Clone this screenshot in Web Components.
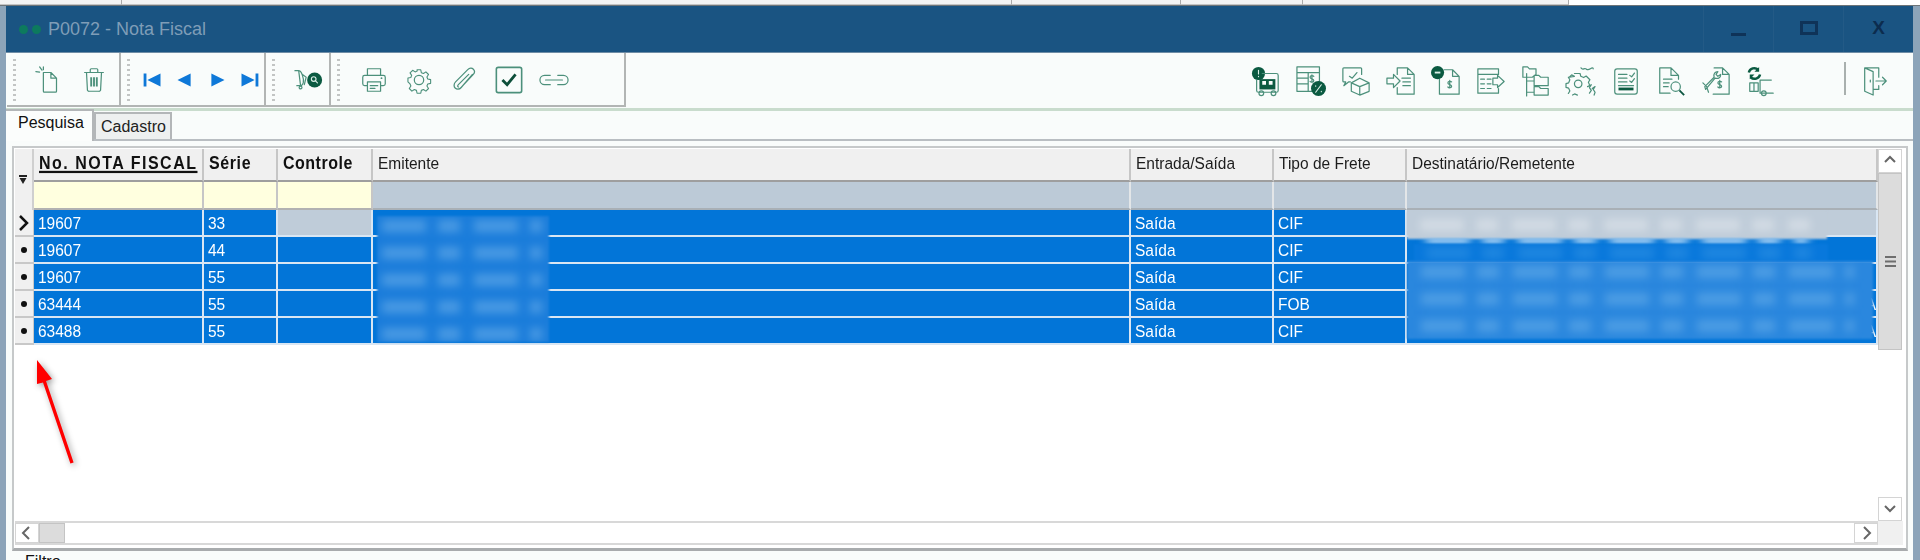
<!doctype html>
<html>
<head>
<meta charset="utf-8">
<style>
  html, body { margin: 0; height: 560px; overflow: hidden; background: #fff; }
  body { font-family: "Liberation Sans", Arial, sans-serif; }
</style>
</head>
<body>
<top-strip></top-strip>
<erp-window>
  <title-bar slot="title">P0072 - Nota Fiscal</title-bar>
  <tool-bar slot="tools">
    <tool-group start="19" style="width:114px" slot="left">
      <tool-icon name="newdoc"></tool-icon><tool-icon name="trash"></tool-icon>
    </tool-group>
    <tool-group start="16" style="width:145px" slot="left">
      <tool-icon name="first" cell="32"></tool-icon><tool-icon name="prev" cell="32"></tool-icon><tool-icon name="next" cell="32"></tool-icon><tool-icon name="last" cell="32"></tool-icon>
    </tool-group>
    <tool-group start="20" style="width:65px" slot="left">
      <tool-icon name="cartsearch"></tool-icon>
    </tool-group>
    <tool-group start="20" style="width:295px" slot="left">
      <tool-icon name="printer"></tool-icon><tool-icon name="gear"></tool-icon><tool-icon name="clip"></tool-icon><tool-icon name="check"></tool-icon><tool-icon name="link"></tool-icon>
    </tool-group>
    <tool-icon slot="right" name="truck"></tool-icon><tool-icon slot="right" name="tablepct"></tool-icon><tool-icon slot="right" name="box"></tool-icon><tool-icon slot="right" name="docin"></tool-icon><tool-icon slot="right" name="docpin"></tool-icon><tool-icon slot="right" name="tablearrow"></tool-icon><tool-icon slot="right" name="tree"></tool-icon><tool-icon slot="right" name="gears"></tool-icon><tool-icon slot="right" name="checklist"></tool-icon><tool-icon slot="right" name="docsearch"></tool-icon><tool-icon slot="right" name="docwrench"></tool-icon><tool-icon slot="right" name="cart"></tool-icon>
    <tool-icon slot="exit" name="door"></tool-icon>
  </tool-bar>
  <tab-strip slot="tabs">
    <tab-item active>Pesquisa</tab-item>
    <tab-item>Cadastro</tab-item>
  </tab-strip>
  <grid-frame slot="body">
    <data-grid>
      <nf-row head>
        <nf-corner></nf-corner>
        <nf-cell tone="head" bold spacing="1.5" underline>No. NOTA FISCAL</nf-cell>
        <nf-cell tone="head" bold spacing=".6">Série</nf-cell>
        <nf-cell tone="head" bold spacing=".5">Controle</nf-cell>
        <nf-cell tone="head">Emitente</nf-cell>
        <nf-cell tone="head">Entrada/Saída</nf-cell>
        <nf-cell tone="head">Tipo de Frete</nf-cell>
        <nf-cell tone="head">Destinatário/Remetente</nf-cell>
      </nf-row>
      <nf-row filter>
        <nf-cell tone="yellow"></nf-cell><nf-cell tone="yellow"></nf-cell><nf-cell tone="yellow"></nf-cell>
        <nf-cell tone="filter"></nf-cell><nf-cell tone="filter"></nf-cell><nf-cell tone="filter"></nf-cell><nf-cell tone="filter"></nf-cell>
      </nf-row>
      <nf-row mark="arrow">
        <nf-cell>19607</nf-cell><nf-cell>33</nf-cell><nf-cell tone="grey"></nf-cell><nf-cell></nf-cell><nf-cell>Saída</nf-cell><nf-cell>CIF</nf-cell><nf-cell tone="grey"></nf-cell>
      </nf-row>
      <nf-row mark="dot">
        <nf-cell>19607</nf-cell><nf-cell>44</nf-cell><nf-cell></nf-cell><nf-cell></nf-cell><nf-cell>Saída</nf-cell><nf-cell>CIF</nf-cell><nf-cell></nf-cell>
      </nf-row>
      <nf-row mark="dot">
        <nf-cell>19607</nf-cell><nf-cell>55</nf-cell><nf-cell></nf-cell><nf-cell></nf-cell><nf-cell>Saída</nf-cell><nf-cell>CIF</nf-cell><nf-cell></nf-cell>
      </nf-row>
      <nf-row mark="dot">
        <nf-cell>63444</nf-cell><nf-cell>55</nf-cell><nf-cell></nf-cell><nf-cell></nf-cell><nf-cell>Saída</nf-cell><nf-cell>FOB</nf-cell><nf-cell end>A</nf-cell>
      </nf-row>
      <nf-row mark="dot">
        <nf-cell>63488</nf-cell><nf-cell>55</nf-cell><nf-cell></nf-cell><nf-cell></nf-cell><nf-cell>Saída</nf-cell><nf-cell>CIF</nf-cell><nf-cell end>A</nf-cell>
      </nf-row>
      <blur-patch kind="emit"></blur-patch>
      <blur-patch kind="dest-grey"></blur-patch>
      <blur-patch kind="dest-remnant"></blur-patch>
      <blur-patch kind="dest-one"></blur-patch>
      <blur-patch kind="dest-rest"></blur-patch>
      <red-arrow></red-arrow>
    </data-grid>
    <scroll-bar slot="v" dir="v" thumb="177"></scroll-bar>
    <scroll-bar slot="h" dir="h" thumb="26"></scroll-bar>
  </grid-frame>
  <filter-label slot="foot">Filtro</filter-label>
</erp-window>

<script>
const css = String.raw
const html = String.raw

class TopStrip extends HTMLElement {
  constructor() {
    super()
    this.attachShadow({ mode: "open" })
    this.shadowRoot.innerHTML = html`
      <style>
        :host { display: flex; height: 5px; background: #fff; border-bottom: 1px solid #6d7478; }
        div { box-sizing: border-box; background: #f3f3f3; border-right: 1px solid #aaa; border-bottom: 1px solid #c4c4c4; }
      </style>
      <div style="width:122px"></div><div style="width:890px"></div><div style="width:169px"></div>
      <div style="width:122px"></div><div style="width:266px"></div>
    `
  }
}
customElements.define("top-strip", TopStrip)

class ErpWindow extends HTMLElement {
  constructor() {
    super()
    this.attachShadow({ mode: "open" })
    this.shadowRoot.innerHTML = html`
      <style>
        :host {
          display: block;
          height: 554px;
          box-sizing: border-box;
          padding: 0 7px 0 6px;
          background: #8ca4b9;
          overflow: hidden;
        }
        .inner { display: flex; flex-direction: column; height: 100%; background: #f9fcfb; }
        .line { height: 3px; margin-top: 1px; background: #c9dccd; flex: none; }
      </style>
      <div class="inner">
        <slot name="title"></slot>
        <slot name="tools"></slot>
        <div class="line"></div>
        <slot name="tabs"></slot>
        <slot name="body"></slot>
        <slot name="foot"></slot>
      </div>
    `
  }
}
customElements.define("erp-window", ErpWindow)

class TitleBar extends HTMLElement {
  constructor() {
    super()
    this.attachShadow({ mode: "open" })
    this.shadowRoot.innerHTML = html`
      <style>
        :host {
          display: flex;
          align-items: center;
          height: 46px;
          flex: none;
          background: #1a5482;
          border-bottom: 1px solid #6f8da6;
          color: #7f9db7;
          font-size: 18px;
        }
        .dots { display: flex; gap: 4px; margin: 0 7px 0 13px; }
        .dots i { width: 9px; height: 9px; border-radius: 50%; background: #0d7a5e; }
        .btns { display: flex; margin-left: auto; align-self: stretch; }
        .btn {
          width: 69px;
          display: flex;
          align-items: center;
          justify-content: center;
          border-left: 1px solid #235a86;
          color: #0c2c4e;
          font-weight: bold;
          font-size: 19px;
        }
        .min { width: 15px; height: 3px; background: #0f3358; margin-top: 10px; }
        .max { width: 12px; height: 8px; border: 3px solid #0f3358; margin-top: -3px; }
        .x { margin-top: -2px; }
      </style>
      <div class="dots"><i></i><i></i></div>
      <slot></slot>
      <div class="btns">
        <div class="btn"><div class="min"></div></div>
        <div class="btn"><div class="max"></div></div>
        <div class="btn"><span class="x">X</span></div>
      </div>
    `
  }
}
customElements.define("title-bar", TitleBar)

class ToolBar extends HTMLElement {
  constructor() {
    super()
    this.attachShadow({ mode: "open" })
    this.shadowRoot.innerHTML = html`
      <style>
        :host { display: flex; height: 54px; flex: none; background: #f9fcfb; }
        .left, .right, .exit { display: flex; align-items: center; }
        .left { align-items: stretch; margin-left: 1px; }
        .right { margin-left: auto; }
        .sep { width: 2px; height: 33px; background: #a9b0ae; margin: 0 6px 0 61px; align-self: center; margin-top: -4px; }
        .exit { margin-right: 16px; }
      </style>
      <div class="left"><slot name="left"></slot></div>
      <div class="right"><slot name="right"></slot></div>
      <div class="sep"></div>
      <div class="exit"><slot name="exit"></slot></div>
    `
  }
}
customElements.define("tool-bar", ToolBar)

class ToolGroup extends HTMLElement {
  connectedCallback() {
    if (this.shadowRoot) return
    this.attachShadow({ mode: "open" })
    const start = this.getAttribute("start") || 19
    this.shadowRoot.innerHTML = html`
      <style>
        :host {
          display: flex;
          align-items: center;
          box-sizing: border-box;
          flex: none;
          position: relative;
          padding-left: ${start}px;
          border-right: 2px solid #b2b5b4;
          border-bottom: 2px solid #b2b5b4;
        }
        .grip {
          position: absolute;
          left: 6px;
          top: 6px;
          bottom: 4px;
          width: 3px;
          background: repeating-linear-gradient(#c2c5c4 0 2px, transparent 2px 5px);
        }
      </style>
      <div class="grip"></div>
      <slot></slot>
    `
  }
}
customElements.define("tool-group", ToolGroup)

const L = `fill="none" stroke="#4c907b" stroke-width="1.3" stroke-linejoin="round" stroke-linecap="round"`
const D = `fill="#0b5a41"`
const W = `fill="none" stroke="#dcefe8" stroke-width="1.2" stroke-linecap="round"`
const B = `fill="#0e78d8"`
const dollar = (x, y) => `<path ${L} d="M${x + 2} ${y}c-1-1-4-1-4 1s4 1.6 4 3.6-3 2-4 .8M${x} ${y - 1.6}v8"/>`
const ICONS = {
  newdoc: `<g ${L}><path d="M10 8h8l6 6v14a1 1 0 0 1-1 1H11a1 1 0 0 1-1-1zM18 8v6h6"/><path d="M6 2l2.500 3.500M2 7l4 .5M10 2v3"/></g>`,
  trash: `<g ${L}><path d="M6 8h20M12 8V5a1 1 0 0 1 1-1h6a1 1 0 0 1 1 1v3M8 8l1 19a2 2 0 0 0 2 1h10a2 2 0 0 0 2-1l1-19"/></g><path fill="none" stroke="#4c907b" stroke-width="2" d="M13 13v10M16 13v10M19 13v10"/>`,
  first: `<path ${B} d="M6 9h3v14H6zM24 9v14L10 16z"/>`,
  prev: `<path ${B} d="M22 9v14L8 16z"/>`,
  next: `<path ${B} d="M10 9v14l14-7z"/>`,
  last: `<path ${B} d="M23 9h3v14h-3zM8 9v14l14-7z"/>`,
  cartsearch: `<g ${L}><path d="M1 6h4c2 0 3 2 4 5l1 4c.5 3-1 6-2 7H3M5 6l2 16M9 10l4 3-2 8"/><circle cx="7" cy="24" r="1.500"/></g><circle cx="22" cy="16" r="8" ${D}/><circle cx="21" cy="15" r="2.500" ${W}/><path ${W} d="M23 17l2 2"/>`,
  printer: `<g ${L}><path d="M9 11V4h14v7M9 22H6a2 2 0 0 1-2-2v-7a2 2 0 0 1 2-2h20a2 2 0 0 1 2 2v7a2 2 0 0 1-2 2h-3M9 18h14v10H9zM12 22h8M12 25h5"/></g><circle cx="24" cy="14" r="1" fill="#4c907b"/>`,
  gear: `<g ${L}><path d="M13.800 4h4.400l.7 3.400 2.500 1 2.900-1.900 3.100 3.100-1.900 2.900 1 2.500 3.400.7v4.400l-3.400.7-1 2.500 1.900 2.900-3.100 3.100-2.900-1.900-2.500 1-.7 3.400h-4.400l-.7-3.400-2.500-1-2.900 1.900-3.100-3.100 1.900-2.900-1-2.500L3 18.200v-4.400l3.400-.7 1-2.500-1.900-2.900 3.100-3.100 2.900 1.900 2.500-1z" transform="translate(1.500 1.500) scale(.9)"/><circle cx="16" cy="16" r="5"/></g>`,
  clip: `<path ${L} stroke-width="1.600" d="M25 10L13 24c-2 2.500-5 2-6.500.5S5 20 7 18L20 5c2-2 4.500-2 6-.5s1.500 4-.5 6L12 25M21 10L10 21c-1 1-1 2 0 2.500"/>`,
  check: `<rect x="2.500" y="2.500" width="27" height="27" rx="2" fill="none" stroke="#4c907b" stroke-width="1.700"/><path d="M9 16l5 5 9-11" fill="none" stroke="#0d4f3a" stroke-width="3"/>`,
  link: `<g ${L}><path d="M12 11H6a5 5 0 0 0 0 10h6M20 11h6a5 5 0 0 1 0 10h-6M7 16h18"/></g>`,
  truck: `<circle cx="8" cy="8" r="7" ${D}/><path ${W} d="M8 4.500v4M8 11v.5"/><g ${L}><path d="M12 8h15a2 2 0 0 1 2 2v16a2 2 0 0 1-2 2H8a2 2 0 0 1-2-2V15"/></g><path ${D} d="M9 14h17v11H9z"/><path fill="#f9fcfb" d="M12 16h4v4h-4zM19 16h4v4h-4z"/><circle cx="11" cy="29" r="2.500" ${L}/><circle cx="24" cy="29" r="2.500" ${L}/>`,
  tablepct: `<g ${L}><path d="M1 1h24v26H1zM1 7h24M1 13h12M1 19h12M13 7v20"/></g>${dollar(17, 11)}<circle cx="24" cy="24" r="8" ${D}/><path ${W} d="M27 20l-6 8M21 21v.5M27 27v.5"/>`,
  box: `<g ${L}><path d="M3 2h18a1 1 0 0 1 1 1v6M3 2a1 1 0 0 0-1 1v13a1 1 0 0 0 1 1h2l-2 4 5-4h2M9 11l3 2 5-6"/><path d="M20 13l10 5v9l-10 4-9-4v-9zM11 18l9 4 10-4M20 22v9"/></g>`,
  docin: `<g ${L}><path d="M12 9V2h11l7 7v21H12v-7M23 2v7h7M1 13h7v-4l7 7-7 7v-4H1zM17 13h9M18 17h8M18 21h8"/></g>`,
  docpin: `<g ${L}><path d="M14 4h9l7 7v19H9V14M23 4v7h7"/></g><circle cx="7" cy="7" r="7" ${D}/><path d="M4 7h6" stroke="#dcefe8" stroke-width="2"/>${dollar(20, 17)}`,
  tablearrow: `<g ${L}><path d="M24 9V3H2v26h22v-5M2 9h22M5 14h4M12 14h4M5 19h4M12 19h4M5 24h4M12 24h4M18 13h5v-3l7 6.500-7 6.500v-3h-5z"/></g>`,
  tree: `<g ${L}><path d="M6 8v24M6 16h8M6 28h8M2 1h5l2 2h7v6l-4 3H2zM14 10h5l2 2h8v9H14zM14 22h5l2 2h8v7H14z"/></g>`,
  gears: `<g ${L}><circle cx="13" cy="19" r="4"/><path d="M9 8h6l.8 3 3 1.300 2.700-1.600 4 4-1.600 2.700 1.300 3M2.500 12l1.600 2.700L2.800 18 0 18.800v4l2.800.8 1.300 3-1.600 2.700M7 31l2.200-1.200 3 1.200"/><path d="M3.500 12l2.500-2.500 3 1.500zM16 2c2 3 3 0 5 1s2 2 5 0 3 0 3 0M23 22l4-2-2 3 2 3-2 3M28 24l3-2-2 3 2 3-1 3"/></g>`,
  checklist: `<rect x="4" y="3" width="24" height="27" rx="2.500" ${L}/><g ${L}><path d="M8 9h9M8 13h9M8 17h9M20 10l2 1.500 3-4M20 16l2 1.500 3-4M8 21h16"/></g><path ${D} d="M8 23h16v3H8z"/>`,
  docsearch: `<g ${L}><path d="M15 29H4V2h12l8 8v4M16 2v8h8M8 14h9M8 18h6M8 22h5"/><circle cx="21" cy="22" r="5"/></g><path d="M25 26l5 5" stroke="#0d5640" stroke-width="2"/>`,
  docwrench: `<g ${L}><path d="M14 2h9l7 7v21H13M23 2v7h7M4 22l10-10c-1-4 1-6 4-6l-2 3 2 2 3-2c0 3-2 5-6 4L5 25l-1-3zM2 18l4 4 2 6"/></g>${dollar(20, 17)}`,
  cart: `<g ${L}><path d="M15 15v14h14M15 15h12M4 18h9v9H4zM8.500 18v9"/><circle cx="19" cy="29" r="2.500"/></g><path d="M3 7a6 6 0 0 1 10-3M15 9a6 6 0 0 1-10 3" fill="none" stroke="#0b5a41" stroke-width="2.600"/><path ${D} d="M14 1v5h-5zM4 14V9h5z"/>`,
  door: `<g ${L}><path d="M5 2h15v10M20 21v4h-6M5 2l9 4v25l-9-4zM17 16h11M24 12l4 4-4 4M11 15v2"/></g>`,
}

class ToolIcon extends HTMLElement {
  connectedCallback() {
    if (this.shadowRoot) return
    this.attachShadow({ mode: "open" })
    const cell = this.getAttribute("cell") || 45
    this.shadowRoot.innerHTML = html`
      <style>
        :host { display: flex; justify-content: center; align-items: center; flex: none; width: ${cell}px; height: 34px; margin-top: 1px; }
        svg { width: 30px; height: 30px; overflow: visible; filter: blur(.35px); }
      </style>
      <svg viewBox="0 0 32 32">${ICONS[this.getAttribute("name")]}</svg>
    `
  }
}
customElements.define("tool-icon", ToolIcon)

class TabStrip extends HTMLElement {
  constructor() {
    super()
    this.attachShadow({ mode: "open" })
    this.shadowRoot.innerHTML = html`
      <style>
        :host { display: flex; height: 30px; flex: none; box-sizing: border-box; border-bottom: 2px solid #b9bec2; align-items: flex-end; }
      </style>
      <slot></slot>
    `
  }
}
customElements.define("tab-strip", TabStrip)

class TabItem extends HTMLElement {
  constructor() {
    super()
    this.attachShadow({ mode: "open" })
    this.shadowRoot.innerHTML = html`
      <style>
        :host {
          display: block;
          box-sizing: border-box;
          width: 78px;
          height: 27px;
          padding: 4px 0 0 5px;
          font-size: 16px;
          color: #222;
          background: #eef0f0;
          border: 2px solid #b3b6b8;
          border-bottom: none;
        }
        :host([active]) {
          width: 88px;
          height: 32px;
          margin-bottom: -2px;
          padding: 3px 0 0 12px;
          background: #fbfdfc;
          color: #111;
          z-index: 1;
          border-left: none;
        }
      </style>
      <slot></slot>
    `
  }
}
customElements.define("tab-item", TabItem)

class GridFrame extends HTMLElement {
  constructor() {
    super()
    this.attachShadow({ mode: "open" })
    this.shadowRoot.innerHTML = html`
      <style>
        :host {
          display: grid;
          grid-template-columns: 1fr 25px;
          grid-template-rows: 372px 24px;
          box-sizing: border-box;
          height: 405px;
          flex: none;
          margin: 5px 0 0 6px;
          width: 1896px;
          padding: 1px 3px 3px 1px;
          border: 2px solid #c6c9ca;
          border-bottom: 3px solid #a8abad;
          background: #fff;
        }
        .corner { background: #f0f0f0; }
        .h { grid-column: 1; min-width: 0; }
      </style>
      <slot></slot>
      <slot name="v"></slot>
      <div class="h"><slot name="h"></slot></div>
      <div class="corner"></div>
    `
  }
}
customElements.define("grid-frame", GridFrame)

class DataGrid extends HTMLElement {
  constructor() {
    super()
    this.attachShadow({ mode: "open" })
    this.shadowRoot.innerHTML = html`
      <style>
        :host {
          display: block;
          position: relative;
          overflow: hidden;
          --cols: 170px 74px 95px 758px 143px 133px 1fr;
        }
      </style>
      <slot></slot>
    `
  }
}
customElements.define("data-grid", DataGrid)

class NfRow extends HTMLElement {
  connectedCallback() {
    if (this.shadowRoot) return
    this.attachShadow({ mode: "open" })
    const mark = this.getAttribute("mark")
    let ind = ""
    if (mark === "dot") ind = `<i class="dot"></i>`
    if (mark === "arrow") ind = `<svg width="10" height="16" viewBox="0 0 10 16"><path d="M1 1l7 7-7 7" fill="none" stroke="#111" stroke-width="2.500"/></svg>`
    const side = this.hasAttribute("head") || this.hasAttribute("filter") ? "" : `<div class="ind">${ind}</div>`
    this.shadowRoot.innerHTML = html`
      <style>
        :host {
          display: grid;
          grid-template-columns: 19px var(--cols);
          height: 27px;
        }
        :host([head]) { grid-template-columns: var(--cols); margin-left: 19px; height: 33px; }
        :host([filter]) { grid-template-columns: var(--cols); margin-left: 19px; height: 28px; }
        .ind {
          display: flex;
          align-items: center;
          justify-content: center;
          box-sizing: border-box;
          background: #f0f0f0;
          border-right: 1px solid #c8c8c8;
          border-bottom: 2px solid #c8c8c8;
        }
        .dot { width: 6px; height: 6px; border-radius: 50%; background: #111; }
      </style>
      ${side}
      <slot></slot>
    `
  }
}
customElements.define("nf-row", NfRow)

class NfCorner extends HTMLElement {
  constructor() {
    super()
    this.attachShadow({ mode: "open" })
    this.shadowRoot.innerHTML = html`
      <style>
        :host {
          display: block;
          position: absolute;
          left: 0;
          top: 0;
          width: 19px;
          height: 61px;
          background: #f0f0f0;
          box-sizing: border-box;
          border-right: 2px solid #cfcfcf;
        }
        svg { position: absolute; left: 4px; top: 26px; }
      </style>
      <svg width="9" height="9" viewBox="0 0 9 9"><path d="M0 0h8v2H0zM.5 3h7L4 9z" fill="#222"/></svg>
    `
  }
}
customElements.define("nf-corner", NfCorner)

class NfCell extends HTMLElement {
  connectedCallback() {
    if (this.shadowRoot) return
    this.attachShadow({ mode: "open" })
    const spacing = this.getAttribute("spacing") || 0
    this.shadowRoot.innerHTML = html`
      <style>
        :host {
          display: flex;
          align-items: center;
          box-sizing: border-box;
          min-width: 0;
          padding-left: 4px;
          overflow: hidden;
          font-size: 15.500px;
          color: #fff;
          background: #0275d8;
          border-right: 2px solid #d9e6f3;
          border-bottom: 2px solid #d9e6f3;
        }
        :host([tone="grey"]) { background: #bfccd9; }
        :host([tone="head"]) {
          color: #1c1c1c;
          background: #f0f0f0;
          border-right: 2px solid #c6c6c6;
          border-bottom: 2px solid #9e9e9e;
          padding-bottom: 4px;
          padding-left: 5px;
        }
        :host([tone="yellow"]) { background: #ffffdf; border-right: 2px solid #c6c6c6; border-bottom: 2px solid #b2b2b2; }
        :host([tone="filter"]) { background: #bccad7; border-right: 2px solid #e3e6e8; border-bottom: 2px solid #a9b0b6; }
        :host([bold]) { font-weight: bold; font-size: 16px; color: #111; }
        :host([underline]) span { text-decoration: underline; text-decoration-thickness: 2px; text-underline-offset: 2px; }
        :host([end]) { justify-content: flex-end; padding: 0; }
        span { display: inline-block; transform: scaleY(1.12); letter-spacing: ${spacing}px; white-space: nowrap; filter: blur(.25px); }
      </style>
      <span><slot></slot></span>
    `
  }
}
customElements.define("nf-cell", NfCell)

// manchas borradas por cima dos nomes
const PATCHES = {
  emit: { box: "left:362px;top:67px;width:172px;height:126px", bg: "#1b7ddb", blob: "#4a9ae3", rows: 5, first: 4 },
  "dest-grey": { box: "left:1392px;top:63px;width:420px;height:27px", bg: "#bfccd9", blob: "#d2dbe4", rows: 1, first: 7 },
  "dest-remnant": { box: "left:1399px;top:89px;width:410px;height:6px", bg: "transparent", blob: "#9ccaf2", rows: 1, first: -3 },
  "dest-one": { box: "left:1399px;top:95px;width:414px;height:17px", bg: "#0878dc", blob: "#1f86e0", rows: 1, first: 3 },
  "dest-rest": { box: "left:1392px;top:112px;width:466px;height:78px", bg: "#2a87de", blob: "#4d9de4", rows: 3, first: 5 },
}

class BlurPatch extends HTMLElement {
  connectedCallback() {
    if (this.shadowRoot) return
    this.attachShadow({ mode: "open" })
    const p = PATCHES[this.getAttribute("kind")]
    let bars = ""
    for (let i = 0; i < p.rows; i++) {
      bars += `<b style="top:${p.first + i * 27}px"></b>`
    }
    this.shadowRoot.innerHTML = html`
      <style>
        :host { display: block; position: absolute; overflow: hidden; background: ${p.bg}; filter: blur(1px); ${p.box} }
        b {
          position: absolute;
          left: 3%;
          right: 4%;
          height: 12px;
          filter: blur(4px);
          background: repeating-linear-gradient(90deg, ${p.blob} 0 44px, transparent 44px 56px, ${p.blob} 56px 78px, transparent 78px 92px);
        }
      </style>
      ${bars}
    `
  }
}
customElements.define("blur-patch", BlurPatch)

class RedArrow extends HTMLElement {
  constructor() {
    super()
    this.attachShadow({ mode: "open" })
    this.shadowRoot.innerHTML = html`
      <style>
        :host { display: block; position: absolute; left: 18px; top: 208px; }
        svg { display: block; filter: drop-shadow(2px 2px 3px rgba(0,0,0,.4)); }
      </style>
      <svg width="50" height="110" viewBox="0 0 50 110">
        <path d="M4 3L19 22 13 24 40.600 105.500 37.400 106.500 10 25.500 4 27z" fill="#f00"/>
      </svg>
    `
  }
}
customElements.define("red-arrow", RedArrow)

class ScrollBar extends HTMLElement {
  connectedCallback() {
    if (this.shadowRoot) return
    this.attachShadow({ mode: "open" })
    const v = this.getAttribute("dir") === "v"
    const thumb = this.getAttribute("thumb")
    const a = v ? "M3 9l5-5 5 5" : "M10 2L4 8l6 6"
    const b = v ? "M3 5l5 5 5-5" : "M6 2l6 6-6 6"
    const grip = v ? `<svg class="grip" width="11" height="11" viewBox="0 0 11 11"><path d="M0 1h11M0 5.500h11M0 10h11" stroke="#6e6e6e" stroke-width="2"/></svg>` : ""
    this.shadowRoot.innerHTML = html`
      <style>
        :host { display: flex; flex-direction: ${v ? "column" : "row"}; height: 100%; width: ${v ? "24px" : "auto"}; background: #fff; border: solid #d8d8d8; border-width: ${v ? "0" : "2px 0"}; box-sizing: border-box; }
        .btn { flex: none; width: 24px; height: ${v ? "24px" : "auto"}; display: flex; align-items: center; justify-content: center; box-sizing: border-box; border: 1px solid #d4d4d4; background: #fff; }
        .thumb {
          flex: none;
          ${v ? `height:${thumb}px` : `width:${thumb}px`};
          background: #dcdcdc;
          box-sizing: border-box;
          border: 1px solid #c4c4c4;
          display: flex;
          align-items: center;
          justify-content: center;
        }
        .track { flex: 1; }
      </style>
      <div class="btn"><svg width="16" height="16" viewBox="0 0 16 16"><path d="${a}" fill="none" stroke="#666" stroke-width="2"/></svg></div>
      <div class="thumb">${grip}</div>
      <div class="track"></div>
      <div class="btn"><svg width="16" height="16" viewBox="0 0 16 16"><path d="${b}" fill="none" stroke="#666" stroke-width="2"/></svg></div>
    `
  }
}
customElements.define("scroll-bar", ScrollBar)

class FilterLabel extends HTMLElement {
  constructor() {
    super()
    this.attachShadow({ mode: "open" })
    this.shadowRoot.innerHTML = html`
      <style>
        :host { display: block; padding: 2px 0 0 19px; font-size: 16px; color: #111; }
      </style>
      <slot></slot>
    `
  }
}
customElements.define("filter-label", FilterLabel)
</script>
</body>
</html>
